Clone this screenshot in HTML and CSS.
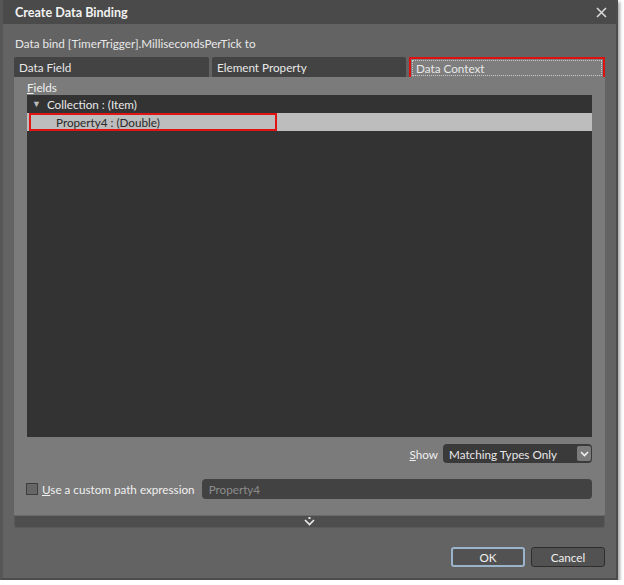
FILE: index.html
```html
<!DOCTYPE html>
<html>
<head>
<meta charset="utf-8">
<link rel="stylesheet" href="styles.css">
</head>
<body>
<div class="window">
  <div class="titlebar">
    <span class="title">Create Data Binding</span>
    <svg class="close" width="11" height="11" viewBox="0 0 11 11"><path d="M1 1 L10 10 M10 1 L1 10" stroke="#d8d8d8" stroke-width="1.6" fill="none"/></svg>
  </div>
  <div class="body">
    <div class="prompt">Data bind [TimerTrigger].MillisecondsPerTick to</div>
    <div class="tabs">
      <div class="tab">Data Field</div>
      <div class="tab">Element Property</div>
      <div class="tab active"><span class="focus">Data Context</span></div>
    </div>
    <div class="panel">
      <div class="label"><u>F</u>ields</div>
      <div class="tree">
        <div class="row"><span class="tri">&#9660;</span>Collection : (Item)</div>
        <div class="row selected"><span class="mark">Property4 : (Double)</span></div>
      </div>
      <div class="show-row">
        <span class="show-label"><u>S</u>how</span>
        <div class="combo">
          <span>Matching Types Only</span>
          <span class="arrow"><svg width="9" height="6" viewBox="0 0 9 6"><path d="M1 1 L4.5 4.5 L8 1" stroke="#f0f0f0" stroke-width="1.6" fill="none"/></svg></span>
        </div>
      </div>
      <div class="custom-row">
        <span class="check"></span>
        <span class="custom-label"><u>U</u>se a custom path expression</span>
        <div class="input">Property4</div>
      </div>
    </div>
    <div class="expander">
      <svg width="11" height="9" viewBox="0 0 11 9"><path d="M1 3 L5.5 7.5 L10 3" stroke="#e8e8e8" stroke-width="1.7" fill="none"/><rect x="4.5" y="0" width="2" height="2" fill="#e8e8e8"/></svg>
    </div>
    <div class="buttons">
      <div class="btn ok">OK</div>
      <div class="btn">Cancel</div>
    </div>
  </div>
</div>
</body>
</html>
```

FILE: styles.css
```css
html, body {
  margin: 0;
  padding: 0;
  background: #ffffff;
}
body {
  font-family: Lato, "Open Sans", sans-serif;
  font-size: 11.7px;
  color: #e8e8e8;
}
.window {
  width: 613px;
  height: 578px;
  background: #636363;
  border-left: 3px solid #565656;
  border-right: 2px solid #4c4c4c;
  border-bottom: 2px solid #4c4c4c;
  box-shadow: 2px 2px 3px rgba(0,0,0,0.35);
  display: flex;
  flex-direction: column;
}
.titlebar {
  height: 24px;
  background: #4a4a4a;
  display: flex;
  align-items: center;
  justify-content: space-between;
  padding: 0 9px 0 12px;
  flex: none;
}
.title {
  font-weight: bold;
  font-size: 12.6px;
  color: #f2f2f2;
}
.body {
  padding: 10px 11px 0 11px;
  display: flex;
  flex-direction: column;
}
.prompt {
  height: 18px;
  line-height: 18px;
  padding-left: 1px;
  margin-bottom: 5px;
}
.tabs {
  display: grid;
  grid-template-columns: 195px 194px 196px;
  gap: 3px;
  height: 20px;
}
.tab {
  background: #434343;
  line-height: 20px;
  padding-left: 5px;
  border-radius: 2px 2px 0 0;
}
.tab.active {
  background: #7e7e7e;
  border: 2px solid #e01010;
  border-radius: 0;
  padding: 1px;
  line-height: 14px;
}
.focus {
  display: block;
  height: 14px;
  border: 1px dotted #c8c8c8;
  padding-left: 3px;
  line-height: 14px;
}
.panel {
  background: #7b7b7b;
  padding: 3px 13px 16px 13px;
  display: flex;
  flex-direction: column;
}
.label {
  height: 15px;
  line-height: 15px;
  color: #f0f0f0;
}
.tree {
  background: #333333;
  height: 342px;
}
.row {
  height: 18px;
  line-height: 18px;
  padding-left: 5px;
  display: flex;
  align-items: center;
}
.tri {
  font-size: 9px;
  color: #bdbdbd;
  margin-right: 6px;
}
.row.selected {
  background: #bdbdbd;
  color: #2a2a2a;
  padding-left: 2px;
}
.mark {
  display: block;
  box-sizing: border-box;
  width: 248px;
  height: 18px;
  border: 2px solid #e01414;
  padding-left: 25px;
  line-height: 14px;
}
.show-row {
  margin-top: 7px;
  height: 19px;
  display: flex;
  justify-content: flex-end;
  align-items: center;
  gap: 5px;
}
.show-label {
  color: #efefef;
}
.combo {
  width: 149px;
  height: 19px;
  box-sizing: border-box;
  background: #3a3a3a;
  border-radius: 4px;
  display: flex;
  align-items: center;
  justify-content: space-between;
  padding: 0 1px 0 6px;
}
.arrow {
  width: 14px;
  height: 15px;
  background: #7b7b7b;
  border-radius: 2px;
  display: flex;
  align-items: center;
  justify-content: center;
}
.custom-row {
  margin-top: 16px;
  height: 20px;
  display: flex;
  align-items: center;
}
.check {
  width: 10px;
  height: 10px;
  border: 1px solid #3d3d3d;
  background: #666;
  margin-left: -1px;
  margin-right: 4px;
}
.custom-label {
  color: #f0f0f0;
  margin-right: 7px;
}
.input {
  flex: 1;
  height: 20px;
  box-sizing: border-box;
  background: #424242;
  border-radius: 4px;
  color: #8c8c8c;
  line-height: 20px;
  padding-left: 7px;
}
.expander {
  height: 13px;
  background: #4e4e4e;
  border: 1px solid #5a5a5a;
  border-top-color: #6a6a6a;
  box-sizing: border-box;
  border-radius: 0 0 3px 3px;
  display: flex;
  justify-content: center;
  align-items: center;
}
.buttons {
  margin-top: 19px;
  display: flex;
  justify-content: flex-end;
  gap: 6px;
}
.btn {
  width: 74px;
  height: 20px;
  box-sizing: border-box;
  background: #525252;
  border: 1px solid #2e2e2e;
  border-radius: 3px;
  text-align: center;
  line-height: 18px;
  color: #f0f0f0;
}
.btn.ok {
  border: 2px solid #9cb3cc;
  line-height: 16px;
}
```
